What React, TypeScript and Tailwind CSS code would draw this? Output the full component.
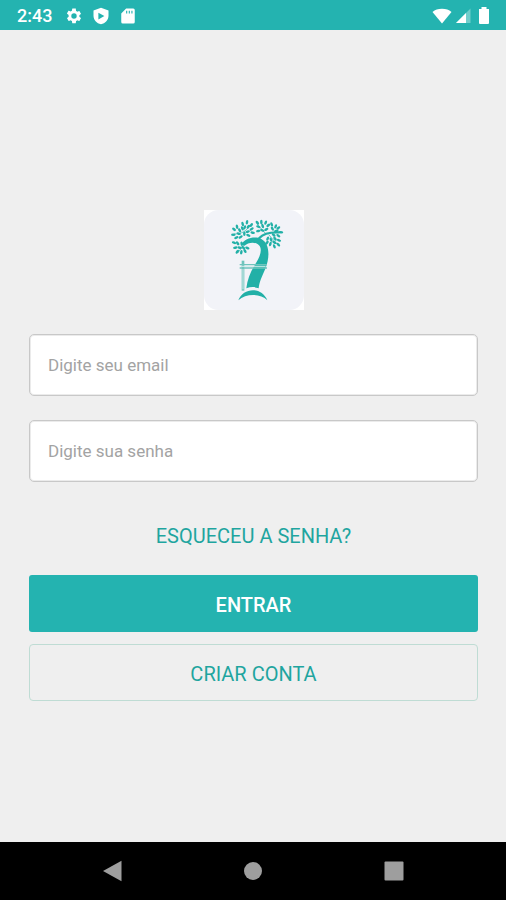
import React, { useState } from 'react';

// x, y and rotation of every leaf in the tree crown
const LEAVES = [
  // left branch
  [117, 88, 40], [115, 104, 0], [126, 80, 80], [134, 91, 60], [131, 101, 15], [124, 113, -25], [137, 111, -30],
  [143, 72, 75], [156, 67, 100], [149, 82, 110], [160, 80, 130], [169, 75, 125], [170, 87, 150], [158, 95, 165],
  [173, 98, 10], [160, 106, 25], [148, 101, 90], [142, 85, 70],
  // lower left branch
  [117, 128, 20], [128, 130, 50], [121, 143, -10], [134, 143, 10], [127, 155, -50], [139, 157, 100], [150, 153, 60],
  [145, 143, 40], [157, 144, 20], [140, 131, 80],
  // middle branch
  [187, 68, 50], [199, 66, 90], [190, 80, 20], [203, 78, 70], [212, 68, 110], [220, 76, 140], [190, 93, -10],
  [202, 91, 20], [214, 88, 150],
  // right branch
  [230, 73, 70], [242, 79, 110], [232, 86, 60], [250, 84, 140], [258, 97, 5], [244, 93, 170], [250, 107, 35],
  [236, 105, 40],
  // lower right branch
  [218, 116, 110], [216, 128, 130], [228, 119, 70], [240, 116, 50], [252, 121, 20], [238, 127, 30], [226, 132, 110],
  [250, 134, 45], [238, 139, 70],
];

export default function App() {
  const [email, setEmail] = useState("");
  const [password, setPassword] = useState("");

  return (
    <div className="min-h-screen flex flex-col bg-[#efefef] font-['Roboto',sans-serif]">
      <StatusBar />

      <main className="flex-1 flex flex-col justify-center pl-[29px] pr-7 pt-[39px]">
        <TreeLogo />

        <form className="mt-6 flex flex-col" onSubmit={(e) => e.preventDefault()}>
          <input
            type="email" aria-label="Email" placeholder="Digite seu email"
            value={email} onChange={(e) => setEmail(e.target.value)}
            className="h-[62px] w-full px-[18px] bg-white border border-[#c8c8c8] rounded-[5px] shadow-[inset_0_0_0_1px_#ebebeb] text-[17px] text-gray-800 placeholder:text-[#a3a3a3] outline-none focus:border-[#24b3b0]"
          />
          <input
            type="password" aria-label="Senha" placeholder="Digite sua senha"
            value={password} onChange={(e) => setPassword(e.target.value)}
            className="mt-6 h-[62px] w-full px-[18px] bg-white border border-[#c8c8c8] rounded-[5px] shadow-[inset_0_0_0_1px_#ebebeb] text-[17px] text-gray-800 placeholder:text-[#a3a3a3] outline-none focus:border-[#24b3b0]"
          />
          <a href="#senha" className="mt-10 self-center text-[20px] leading-7 text-[#1fa59f]">
            ESQUECEU A SENHA?
          </a>
          <button
            type="submit"
            className="mt-[25px] pt-[2px] h-[57px] bg-[#24b3b0] rounded-[3px] text-[20px] font-medium text-white"
          >
            ENTRAR
          </button>
          <button
            type="button"
            className="mt-3 pt-[2px] h-[57px] border border-[#bfdcd4] rounded-[4px] text-[20px] text-[#1fa59f]"
          >
            CRIAR CONTA
          </button>
        </form>
      </main>

      <NavigationBar />
    </div>
  );
}

function StatusBar() {
  return (
    <header className="h-[30px] pl-[17px] pr-[14px] pt-px flex items-center justify-between bg-[#24b3b0] text-white">
      <div className="flex items-center gap-[9px]">
        <span className="w-[39px] text-lg leading-6 font-medium">2:43</span>
        <svg viewBox="0 0 24 24" className="w-[18px] h-[18px]" fill="currentColor" aria-hidden="true">
          <path d="M19.14 12.94c.04-.3.06-.61.06-.94s-.02-.64-.07-.94l2.03-1.58a.49.49 0 0 0 .12-.61l-1.92-3.32a.49.49 0 0 0-.59-.22l-2.39.96a7 7 0 0 0-1.62-.94l-.36-2.54A.48.48 0 0 0 13.92 2h-3.84a.48.48 0 0 0-.48.41l-.36 2.54a7.4 7.4 0 0 0-1.62.94l-2.39-.96a.48.48 0 0 0-.59.22L2.73 8.47a.48.48 0 0 0 .12.61l2.03 1.58a6 6 0 0 0 0 2.28l-2.03 1.58a.49.49 0 0 0-.12.61l1.92 3.32c.12.22.37.29.59.22l2.39-.96c.5.38 1.03.7 1.62.94l.36 2.54c.05.24.24.41.48.41h3.84c.24 0 .44-.17.47-.41l.36-2.54a7 7 0 0 0 1.62-.94l2.39.96c.22.08.47 0 .59-.22l1.92-3.32a.48.48 0 0 0-.12-.61zM12 15.6a3.6 3.6 0 1 1 0-7.2 3.6 3.6 0 0 1 0 7.2z" />
        </svg>
        <svg viewBox="0 0 24 24" className="w-[18px] h-[18px]" fill="currentColor" fillRule="evenodd" aria-hidden="true">
          <path d="M12 1 2 4.500v7c0 5.500 4.200 10 10 11.500 5.800-1.500 10-6 10-11.500v-7zM8.500 7.500l8 4.500-8 4.500z" />
        </svg>
        <svg viewBox="0 0 24 24" className="w-[18px] h-[18px]" fill="currentColor" fillRule="evenodd" aria-hidden="true">
          <path d="M19 2H9.500L3 8.500V20a2 2 0 0 0 2 2h14a2 2 0 0 0 2-2V4a2 2 0 0 0-2-2zM9.500 5h1.500v3.500H9.500zm3.500 0h1.500v3.500H13zm3.500 0H18v3.500h-1.500z" />
        </svg>
      </div>

      <div className="flex items-center gap-1">
        <svg viewBox="0 0 20 16" className="w-5 h-4" fill="currentColor" aria-hidden="true">
          <path d="M10 15.500.5 4C3 1.800 6 .8 10 .8s7 1 9.500 3.200z" />
        </svg>
        <svg viewBox="0 0 16 16" className="w-4 h-4" fill="currentColor" aria-hidden="true">
          <path d="M0 15 14.500.5V15z" opacity="0.35" />
          <path d="M0 15 10 5v10z" />
        </svg>
        <svg viewBox="0 0 16 18" className="w-4 h-[18px]" fill="currentColor" aria-hidden="true">
          <path d="M5.500 0h5v2H13v14a1 1 0 0 1-1 1H4a1 1 0 0 1-1-1V2h2.500z" />
        </svg>
      </div>
    </header>
  );
}

function TreeLogo() {
  return (
    <svg viewBox="27 30 300 300" className="w-[100px] h-[100px] self-center shrink-0" role="img" aria-label="Logo">
      <rect x="27" y="30" width="300" height="300" fill="#ffffff" />
      <rect x="27" y="30" width="300" height="300" rx="44" fill="#f2f3f8" />

      <g fill="#22b0a7">
        {/* trunk and the ground below it */}
        <path d="M139 133C150 114 180 107 199 117C226 131 224 176 211 206C200 232 193 245 191 265C179 260 168 260 154 265C157 240 165 218 179 196C194 172 204 149 192 136C180 124 160 127 147 138Z" />
        <path d="M130 301C145 261 201 260 217 301C196 280 153 280 130 301Z" />
        {LEAVES.map(([x, y, angle], i) => (
          <ellipse key={i} cx={x} cy={y} rx="6.800" ry="3.800" transform={`rotate(${angle} ${x} ${y})`} />
        ))}
      </g>

      <g fill="none" stroke="#22b0a7" strokeLinecap="round">
        <path d="M193 114C204 101 222 96 252 97" strokeWidth="7" />
        <path d="M118 102C140 102 153 94 166 76M140 143 129 158M186 72 212 101M222 105 246 132" strokeWidth="2" />
      </g>

      {/* crutch leaning on the trunk */}
      <g fill="none" stroke="#6fc4bd">
        <path d="M134 194H216M134 204H216" strokeWidth="4" />
        <path d="M144 182V272" strokeWidth="8" />
        <path d="M144 207V268M140 199H212" stroke="#d5ecec" strokeWidth="3" />
      </g>
    </svg>
  );
}

function NavigationBar() {
  return (
    <nav className="h-[58px] px-[101px] flex items-center justify-between bg-black text-[#9e9e9e]">
      <button type="button" aria-label="Voltar">
        <svg viewBox="0 0 22 22" className="w-[22px] h-[22px]" fill="currentColor"><path d="M20.500.8v20.400L2 11z" /></svg>
      </button>
      <button type="button" aria-label="Início">
        <svg viewBox="0 0 22 22" className="w-[22px] h-[22px]" fill="currentColor"><circle cx="11" cy="11" r="9" /></svg>
      </button>
      <button type="button" aria-label="Recentes">
        <svg viewBox="0 0 22 22" className="w-[22px] h-[22px]" fill="currentColor"><rect x="1.500" y="1.500" width="19" height="19" rx="1" /></svg>
      </button>
    </nav>
  );
}
